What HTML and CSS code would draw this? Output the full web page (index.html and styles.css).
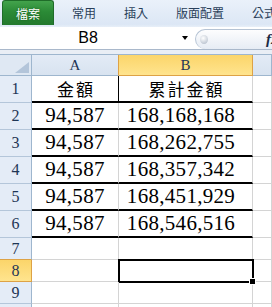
FILE: index.html
```html
<!DOCTYPE html>
<html lang="zh-Hant">
<head>
    <meta charset="UTF-8">
    <meta name="viewport" content="width=device-width, initial-scale=1.0">
    <title>活頁簿</title>
    <link rel="stylesheet" href="styles.css">
</head>
<body>
    <div class="ribbon">
        <div class="tab file">檔案</div>
        <div class="tab first">常用</div>
        <div class="tab">插入</div>
        <div class="tab">版面配置</div>
        <div class="tab">公式</div>
    </div>

    <div class="formula-bar">
        <div class="name-box">B8</div>
        <div class="name-arrow"></div>
        <div class="grip">
            <span class="bead"></span>
            <span class="fx">fx</span>
        </div>
    </div>
    <div class="band"></div>

    <div class="sheet">
        <!-- header row -->
        <div class="corner">
            <svg width="14" height="11" viewBox="0 0 14 11"><polygon points="14,0 14,11 0,11" fill="#b3c5da"/></svg>
        </div>
        <div class="col-head before-sel">A</div>
        <div class="col-head sel">B</div>
        <div class="col-head"></div>

        <div class="row-head">1</div>
        <div class="cell title rule split">金額</div>
        <div class="cell title rule">累計金額</div>
        <div class="cell"></div>

        <div class="row-head">2</div>
        <div class="cell num rule">94,587</div>
        <div class="cell num wide rule">168,168,168</div>
        <div class="cell"></div>

        <div class="row-head">3</div>
        <div class="cell num rule">94,587</div>
        <div class="cell num wide rule">168,262,755</div>
        <div class="cell"></div>

        <div class="row-head">4</div>
        <div class="cell num rule">94,587</div>
        <div class="cell num wide rule">168,357,342</div>
        <div class="cell"></div>

        <div class="row-head">5</div>
        <div class="cell num rule">94,587</div>
        <div class="cell num wide rule">168,451,929</div>
        <div class="cell"></div>

        <div class="row-head">6</div>
        <div class="cell num rule">94,587</div>
        <div class="cell num wide rule">168,546,516</div>
        <div class="cell"></div>

        <div class="row-head before-sel">7</div>
        <div class="cell"></div>
        <div class="cell"></div>
        <div class="cell"></div>

        <div class="row-head sel">8</div>
        <div class="cell"></div>
        <div class="cell active"><span class="handle"></span></div>
        <div class="cell"></div>

        <div class="row-head">9</div>
        <div class="cell"></div>
        <div class="cell"></div>
        <div class="cell"></div>

        <div class="row-head"></div>
        <div class="cell"></div>
        <div class="cell"></div>
        <div class="cell"></div>
    </div>
</body>
</html>
```

FILE: styles.css
```css
* {
    margin: 0;
    padding: 0;
    box-sizing: border-box;
}
html, body {
    height: 100%;
    overflow: hidden;
}
body {
    background: #fff;
    font-family: "Noto Sans CJK TC", "Liberation Sans", sans-serif;
}

/* ribbon tabs */
.ribbon {
    display: flex;
    height: 27px;
    overflow: hidden;
    background: linear-gradient(#eaf1fa, #dce7f5 90%, #e8eff8);
}
.tab {
    flex-shrink: 0;
    height: 25px;
    padding: 0 14px;
    white-space: nowrap;
    font-size: 12px;
    line-height: 25px;
    color: #2a3f5a;
}
.tab.first {
    margin-left: 4px;
}
.tab.file {
    width: 52px;
    margin-left: 2px;
    padding: 0;
    text-align: center;
    color: #fff;
    background: linear-gradient(#43a34c, #2b8a36 45%, #23792d);
    border: 1px solid #1f6c29;
    border-bottom: none;
    border-radius: 3px 3px 0 0;
    text-shadow: 0 0 2px rgba(0, 60, 0, 0.6);
}

/* name box + formula bar */
.formula-bar {
    display: flex;
    height: 23px;
    overflow: hidden;
    background: #fff;
    border-bottom: 1px solid #a9b8cb;
}
.name-box {
    flex-shrink: 0;
    width: 176px;
    text-align: center;
    font-family: "Liberation Sans", sans-serif;
    font-size: 16px;
    line-height: 22px;
    color: #000;
}
.name-arrow {
    flex-shrink: 0;
    width: 17px;
    display: flex;
    align-items: center;
    justify-content: center;
}
.name-arrow::before {
    content: "";
    border-left: 3px solid transparent;
    border-right: 3px solid transparent;
    border-top: 4px solid #000;
}
.grip {
    display: flex;
    align-items: center;
    flex: 1;
    height: 20px;
    margin: 2px 0 0 2px;
    padding-left: 4px;
    white-space: nowrap;
    background: linear-gradient(#fdfdfe, #e6ecf4);
    border: 1px solid #b5c3d4;
    border-right: none;
    border-bottom: none;
    border-radius: 10px 0 0 10px;
}
.bead {
    flex-shrink: 0;
    width: 8px;
    height: 9px;
    border-radius: 50%;
    background: radial-gradient(circle at 40% 35%, #fff, #c3cbd6 70%, #a9b3c0);
}
.fx {
    margin-left: 58px;
    font-family: "Liberation Serif", serif;
    font-style: italic;
    font-weight: 700;
    font-size: 15px;
    color: #1b2b44;
}
.band {
    height: 4px;
    background: #e9eef5;
}

/* worksheet grid */
.sheet {
    display: grid;
    grid-template-columns: 32px 87px 134px 1fr;
    grid-template-rows: 21px repeat(6, 27px) repeat(3, 22px) 22px;
    border-top: 1px solid #9eb6ce;
}
.corner {
    display: flex;
    align-items: flex-end;
    justify-content: flex-end;
    padding: 0 2px 2px 0;
    background: #dfe8f3;
    border-right: 1px solid #9eb6ce;
    border-bottom: 1px solid #9eb6ce;
}
.col-head {
    text-align: center;
    font-family: "Liberation Serif", serif;
    font-size: 15px;
    line-height: 20px;
    color: #1e3555;
    background: linear-gradient(#e3ebf6, #d8e3f0);
    border-right: 1px solid #9eb6ce;
    border-bottom: 1px solid #9eb6ce;
}
.col-head.before-sel {
    border-right-color: #dda246;
}
.col-head.sel {
    background: linear-gradient(#fbd56a, #ffe48e);
    border-right-color: #dda246;
    border-bottom-color: #dda246;
}
.row-head {
    display: flex;
    align-items: center;
    justify-content: center;
    font-family: "Liberation Serif", serif;
    font-size: 16px;
    color: #1e3555;
    background: #e4ecf7;
    border-right: 1px solid #9eb6ce;
    border-bottom: 1px solid #b4c6da;
}
.row-head.before-sel {
    border-bottom-color: #dda246;
}
.row-head.sel {
    background: linear-gradient(#fbd56a, #ffe48e);
    border-right-color: #dda246;
    border-bottom-color: #dda246;
}
.cell {
    position: relative;
    display: flex;
    align-items: center;
    justify-content: center;
    border-right: 1px solid #d4d4d4;
    border-bottom: 1px solid #d4d4d4;
    color: #000;
}
.cell.rule {
    border-bottom: 2px solid #000;
}
.cell.split {
    border-right-color: #000;
}
.cell.title {
    font-size: 17px;
    letter-spacing: 2px;
    padding-left: 2px;
}
.cell.num {
    font-family: "Liberation Serif", serif;
    font-size: 21px;
    letter-spacing: 0.3px;
}
.cell.wide {
    padding-right: 9px;
}

/* active cell outline */
.cell.active::after {
    content: "";
    position: absolute;
    top: -1px;
    left: -1px;
    right: -2px;
    bottom: -2px;
    border: 2px solid #000;
}
.handle {
    position: absolute;
    right: -4px;
    bottom: -4px;
    width: 7px;
    height: 7px;
    background: #000;
    border: 1px solid #fff;
    z-index: 1;
}
```
